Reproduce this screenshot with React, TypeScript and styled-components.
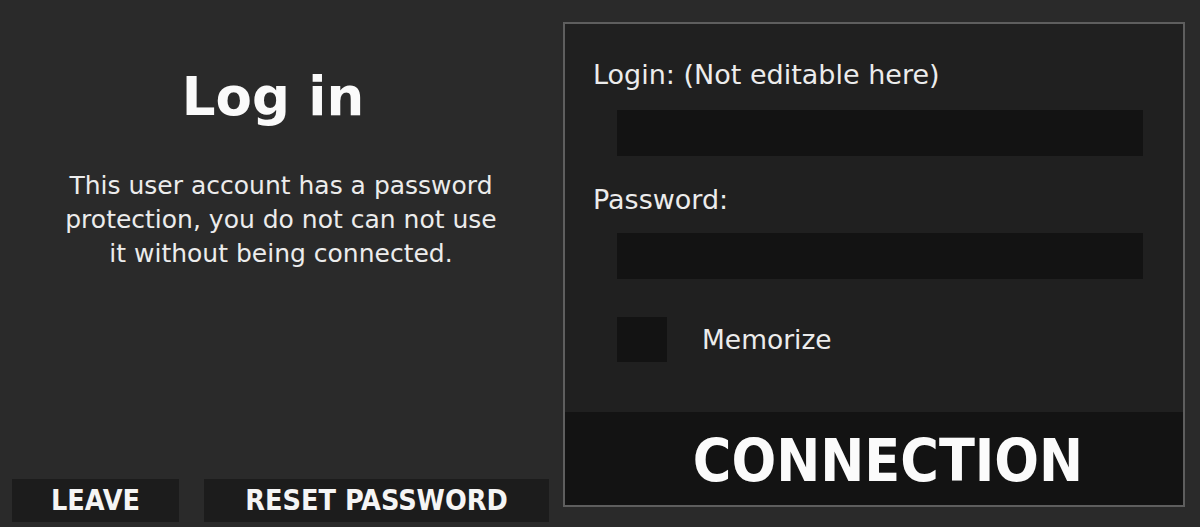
import React from 'react'
import styled, { createGlobalStyle } from 'styled-components'

const GlobalStyle = createGlobalStyle`
  html, body {
    margin: 0;
    padding: 0;
    background: #2a2a2a;
  }
  body {
    font-family: 'DejaVu Sans', Verdana, sans-serif;
    color: #f2f2f2;
  }
`

const Screen = styled.div`
  display: flex;
  width: 1200px;
  height: 527px;
  box-sizing: border-box;
  padding: 22px 15px 0 12px;
  background: #2a2a2a;
`

const Side = styled.div`
  width: 538px;
  display: flex;
  flex-direction: column;
  align-items: center;
  padding-bottom: 5px;
`

const Title = styled.h1`
  margin: 43px 0 0 0;
  font-size: 53px;
  font-weight: bold;
  line-height: 64px;
  color: #fafafa;
  transform: translateX(-8px);
`

const Description = styled.p`
  margin: 40px 0 0 0;
  width: 446px;
  text-align: center;
  font-size: 25px;
  line-height: 34px;
  color: #ececec;
`

const ButtonRow = styled.div`
  margin-top: auto;
  display: flex;
  gap: 25px;
  align-self: stretch;
`

const FlatButton = styled.button<{ $width: number }>`
  width: ${p => p.$width}px;
  height: 43px;
  border: none;
  background: #1c1c1c;
  color: #f5f5f5;
  font-family: 'DejaVu Sans Condensed', 'DejaVu Sans', sans-serif;
  font-stretch: condensed;
  font-weight: bold;
  font-size: 28.5px;
  padding: 0;
  cursor: pointer;
`

const Panel = styled.form`
  margin-left: 13px;
  width: 622px;
  height: 485px;
  box-sizing: border-box;
  border: 2px solid #5e5e5e;
  background: #202020;
  display: flex;
  flex-direction: column;
`

const Field = styled.div<{ $top: number }>`
  margin-top: ${p => p.$top}px;
  padding: 0 40px 0 28px;
  display: flex;
  flex-direction: column;
`

const FieldLabel = styled.label`
  font-size: 27px;
  line-height: 34px;
  color: #ececec;
`

const TextBox = styled.input<{ $gap: number }>`
  margin: ${p => p.$gap}px 0 0 24px;
  width: 526px;
  height: 46px;
  box-sizing: border-box;
  border: none;
  background: #131313;
  color: #eee;
  font-size: 22px;
  padding: 0 12px;
  outline: none;
`

const CheckRow = styled.label`
  display: flex;
  align-items: center;
  gap: 35px;
  padding-left: 52px;
  margin-top: 38px;
  font-size: 26.5px;
  color: #ececec;
`

const CheckBox = styled.span`
  width: 50px;
  height: 45px;
  background: #131313;
`

const ConnectButton = styled.button`
  margin-top: auto;
  height: 93px;
  border: none;
  background: #131313;
  color: #fbfbfb;
  font-family: 'DejaVu Sans Condensed', 'DejaVu Sans', sans-serif;
  font-stretch: condensed;
  font-weight: bold;
  font-size: 58.5px;
  padding: 4px 0 0 28px;
  cursor: pointer;
`

export default function App() {
  return (
    <>
      <GlobalStyle />
      <Screen>
        <Side>
          <Title>Log in</Title>
          <Description>
            This user account has a password protection, you do not can not use it without being connected.
          </Description>
          <ButtonRow>
            <FlatButton $width={167}>LEAVE</FlatButton>
            <FlatButton $width={345}>RESET PASSWORD</FlatButton>
          </ButtonRow>
        </Side>
        <Panel onSubmit={e => e.preventDefault()}>
          <Field $top={34}>
            <FieldLabel>Login: (Not editable here)</FieldLabel>
            <TextBox readOnly $gap={18} />
          </Field>
          <Field $top={27}>
            <FieldLabel>Password:</FieldLabel>
            <TextBox type="password" $gap={16} />
          </Field>
          <CheckRow>
            <CheckBox />
            Memorize
          </CheckRow>
          <ConnectButton type="submit">CONNECTION</ConnectButton>
        </Panel>
      </Screen>
    </>
  )
}
